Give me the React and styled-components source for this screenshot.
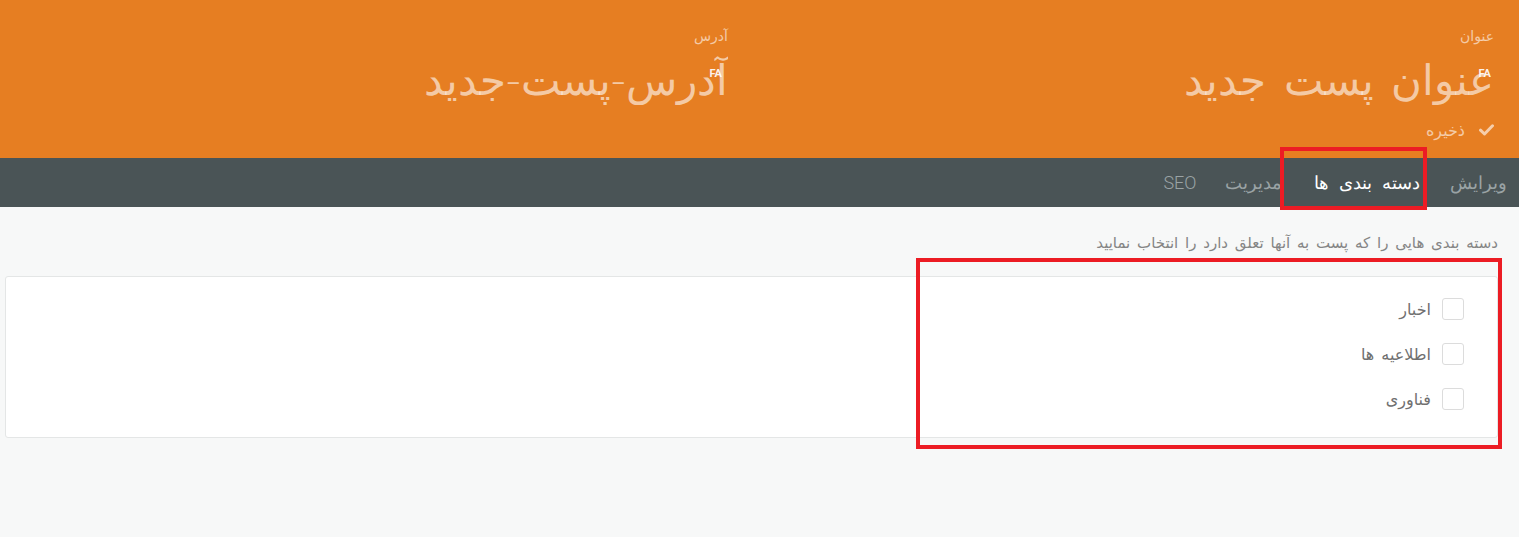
import styled, { createGlobalStyle } from 'styled-components';

const GlobalStyle = createGlobalStyle`
  * { box-sizing: border-box; }
  body {
    margin: 0;
    background: #f7f8f8;
    font-family: "Roboto", "DejaVu Sans", sans-serif;
  }
`;

const Page = styled.div`
  position: relative;
  min-height: 537px;
  direction: rtl;
  overflow: hidden;
`;

const Header = styled.header`
  background: #e67e22;
  height: 158px;
  padding: 26px 25px 0;
`;

const Fields = styled.div`
  display: grid;
  grid-template-columns: 1fr 1fr;
  column-gap: 63px;
`;

const Field = styled.div`
  display: flex;
  flex-direction: column;
`;

const FieldLabel = styled.label`
  font-family: "DejaVu Sans", sans-serif;
  font-size: 14px;
  line-height: 20px;
  color: rgba(255, 255, 255, 0.6);
  margin-bottom: 6px;
`;

const InputWrap = styled.div`
  position: relative;
`;

const BigInput = styled.input`
  width: 100%;
  height: 56px;
  border: none;
  outline: none;
  background: transparent;
  direction: rtl;
  padding: 0;
  font-family: "DejaVu Sans", sans-serif;
  font-weight: 300;
  font-size: 42px;
  word-spacing: 4px;
  color: rgba(255, 255, 255, 0.6);
`;

const Lang = styled.span`
  position: absolute;
  top: ${p => p.$top}px;
  right: ${p => p.$right}px;
  font-family: "Roboto", sans-serif;
  font-size: 11px;
  font-weight: 700;
  color: rgba(255, 255, 255, 0.92);
`;

const SaveRow = styled.div`
  display: flex;
  align-items: center;
  gap: 14px;
  margin-top: 12px;
  height: 20px;
  color: rgba(255, 255, 255, 0.6);
  font-family: "DejaVu Sans", sans-serif;
  font-size: 16px;
`;

const Nav = styled.nav`
  display: flex;
  align-items: stretch;
  height: 49px;
  background: #4a5456;
`;

const Tab = styled.a`
  display: flex;
  align-items: center;
  justify-content: center;
  width: ${p => p.$w}px;
  font-family: "Roboto", "DejaVu Sans", sans-serif;
  font-size: 18px;
  font-weight: 300;
  word-spacing: ${p => (p.$active ? 6 : 0)}px;
  color: ${p => (p.$active ? '#ffffff' : '#9aa3a5')};
  cursor: pointer;
`;

const Content = styled.main`
  padding: 26px 21px 40px 5px;
`;

const Hint = styled.p`
  margin: 0 0 23px;
  line-height: 20px;
  font-family: "DejaVu Sans", sans-serif;
  font-size: 15px;
  word-spacing: 2px;
  color: #858585;
`;

const Card = styled.div`
  background: #fff;
  border: 1px solid #e4e6e6;
  border-radius: 3px;
  padding: 21px 33px 27px;
  display: flex;
  flex-direction: column;
  gap: 23px;
`;

const CheckRow = styled.label`
  display: flex;
  align-items: center;
  gap: 11px;
  height: 22px;
  font-family: "DejaVu Sans", sans-serif;
  font-size: 16px;
  word-spacing: 2px;
  color: #707070;
`;

const Box = styled.span`
  width: 22px;
  height: 22px;
  border: 1px solid #dcdcdc;
  border-radius: 3px;
  background: #fff;
`;

const Mark = styled.div`
  position: absolute;
  left: ${p => p.$x}px;
  top: ${p => p.$y}px;
  width: ${p => p.$w}px;
  height: ${p => p.$h}px;
  border: 4px solid #ec1c24;
  pointer-events: none;
`;

const CheckIcon = () => (
  <svg width="15" height="12" viewBox="0 0 15 12">
    <path d="M1.5 6.2 L5.5 10 L13.5 1.8" fill="none" stroke="rgba(255,255,255,0.62)" strokeWidth="3" strokeLinecap="round" strokeLinejoin="round" />
  </svg>
);

const categories = ['اخبار', 'اطلاعیه ها', 'فناوری'];

export default function App() {
  return (
    <Page>
      <GlobalStyle />
      <Header>
        <Fields>
          <Field>
            <FieldLabel>عنوان</FieldLabel>
            <InputWrap>
              <BigInput defaultValue="عنوان پست جدید" />
              <Lang $top={15} $right={3}>FA</Lang>
            </InputWrap>
          </Field>
          <Field>
            <FieldLabel>آدرس</FieldLabel>
            <InputWrap>
              <BigInput defaultValue="آدرس-پست-جدید" />
              <Lang $top={15} $right={6}>FA</Lang>
            </InputWrap>
          </Field>
        </Fields>
        <SaveRow>
          <CheckIcon />
          <span>ذخیره</span>
        </SaveRow>
      </Header>

      <Nav>
        <Tab $w={82}>ویرایش</Tab>
        <Tab $active $w={140}>دسته بندی ها</Tab>
        <Tab $w={88}>مدیریت</Tab>
        <Tab $w={58}>SEO</Tab>
      </Nav>

      <Content>
        <Hint>دسته بندی هایی را که پست به آنها تعلق دارد را انتخاب نمایید</Hint>
        <Card>
          {categories.map(c => (
            <CheckRow key={c}>
              <Box />
              <span>{c}</span>
            </CheckRow>
          ))}
        </Card>
      </Content>

      <Mark $x={1280} $y={147} $w={147} $h={63} />
      <Mark $x={916} $y={258} $w={586} $h={191} />
    </Page>
  );
}
